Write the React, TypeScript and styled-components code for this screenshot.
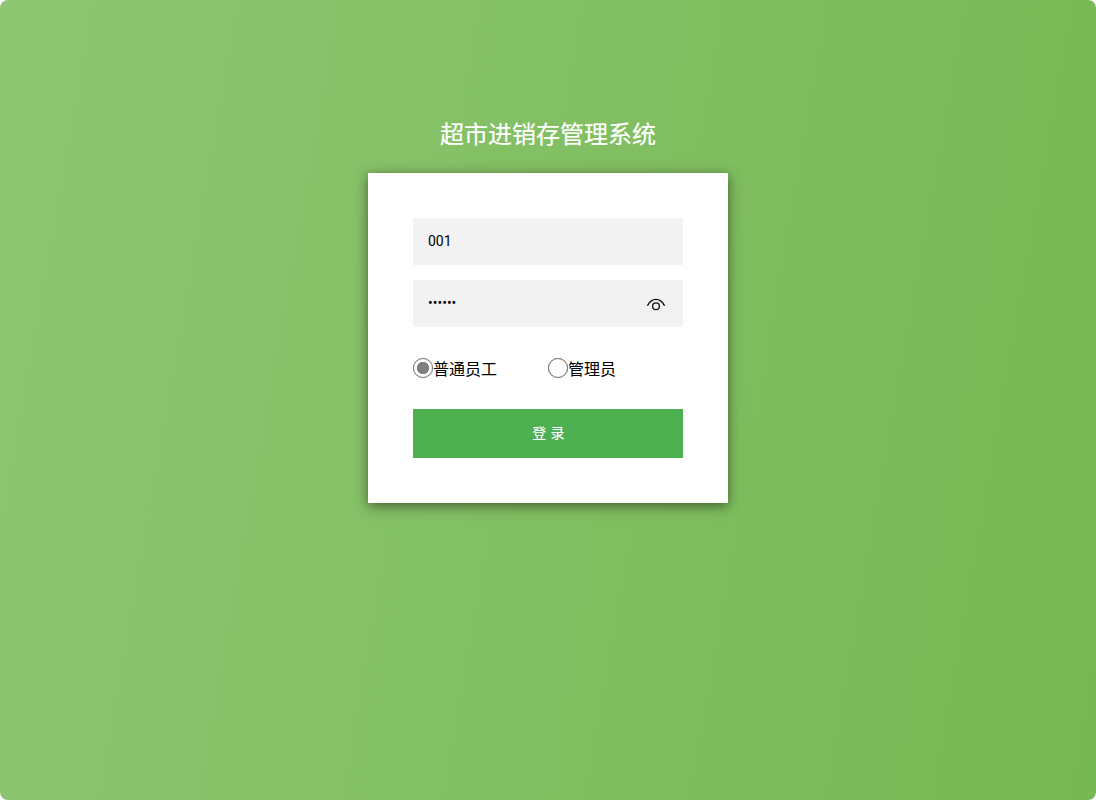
import React from "react";
import styled, { createGlobalStyle } from "styled-components";

const Global = createGlobalStyle`
  html, body { margin: 0; padding: 0; background: #fff; }
  * { box-sizing: border-box; }
`;

const Page = styled.div`
  width: 100%;
  height: 800px;
  overflow: hidden;
  border-radius: 8px;
  background: linear-gradient(100deg, #8ec672 0%, #76b852 100%);
  display: flex;
  flex-direction: column;
  align-items: center;
  padding-top: 118px;
  font-family: Roboto, "Noto Sans CJK SC", sans-serif;
`;

const Title = styled.h1`
  margin: 0 0 20px;
  height: 35px;
  font-size: 24px;
  line-height: 35px;
  font-weight: 400;
  color: #fff;
  text-align: center;
  -webkit-text-stroke: 0.2px #fff;
`;

const Card = styled.form`
  width: 360px;
  height: 330px;
  padding: 45px;
  background: #fff;
  box-shadow: 0 3px 12px rgba(0, 0, 0, 0.5);
  display: flex;
  flex-direction: column;
`;

const Field = styled.div`
  position: relative;
  height: 47px;
  margin-bottom: 15px;
`;

const Input = styled.input`
  display: block;
  width: 100%;
  height: 100%;
  padding: 0 15px 1px;
  border: 0;
  outline: 0;
  background: #f2f2f2;
  color: #000;
  font-family: Roboto, sans-serif;
  font-size: 14px;
`;

const EyeButton = styled.span`
  position: absolute;
  right: 17px;
  top: 16px;
  display: flex;
  width: 20px;
  height: 18px;
`;

const Roles = styled.div`
  display: flex;
  height: 22px;
  margin: 15px 0 30px;
`;

const RoleLabel = styled.label<{ $width: number }>`
  display: flex;
  align-items: center;
  width: ${(p) => p.$width}px;
  height: 22px;
  color: #000;
  font-size: 16px;
  line-height: 22px;
`;

const Radio = styled.input`
  appearance: none;
  flex: none;
  width: 20px;
  height: 20px;
  margin: 0;
  border: 1px solid #767676;
  border-radius: 50%;
  background: #fff;
  box-shadow: 0 0 0.5px #767676;
  &:checked {
    background: radial-gradient(circle, #808080 0, #808080 5.8px, #fff 6.5px);
  }
`;

const RoleText = styled.span`
  position: relative;
  top: 2px;
`;

const Submit = styled.button`
  width: 270px;
  height: 49px;
  border: 0;
  padding: 0 0 3px 1px;
  background: #4caf50;
  color: #fff;
  font-family: Roboto, "Noto Sans CJK SC", sans-serif;
  font-size: 14px;
  letter-spacing: 0.4px;
  -webkit-text-stroke: 0.15px #fff;
`;

function Eye() {
  return (
    <svg width="20" height="18" viewBox="0 0 20 18" fill="none" stroke="#111" strokeWidth="1.3">
      <path d="M1.7 9.4 C4 4.9 6.8 3.4 10 3.4 C13.2 3.4 16 4.9 18.3 9.4" strokeLinecap="round" />
      <circle cx="10" cy="10.3" r="3.4" />
    </svg>
  );
}

export default function App() {
  return (
    <>
      <Global />
      <Page>
        <Title>超市进销存管理系统</Title>
        <Card onSubmit={(e) => e.preventDefault()}>
          <Field>
            <Input type="text" defaultValue="001" />
          </Field>
          <Field>
            <Input type="password" defaultValue="123456" />
            <EyeButton>
              <Eye />
            </EyeButton>
          </Field>
          <Roles>
            <RoleLabel $width={135}>
              <Radio type="radio" name="role" defaultChecked />
              <RoleText>普通员工</RoleText>
            </RoleLabel>
            <RoleLabel $width={135}>
              <Radio type="radio" name="role" />
              <RoleText>管理员</RoleText>
            </RoleLabel>
          </Roles>
          <Submit type="submit">登 录</Submit>
        </Card>
      </Page>
    </>
  );
}
